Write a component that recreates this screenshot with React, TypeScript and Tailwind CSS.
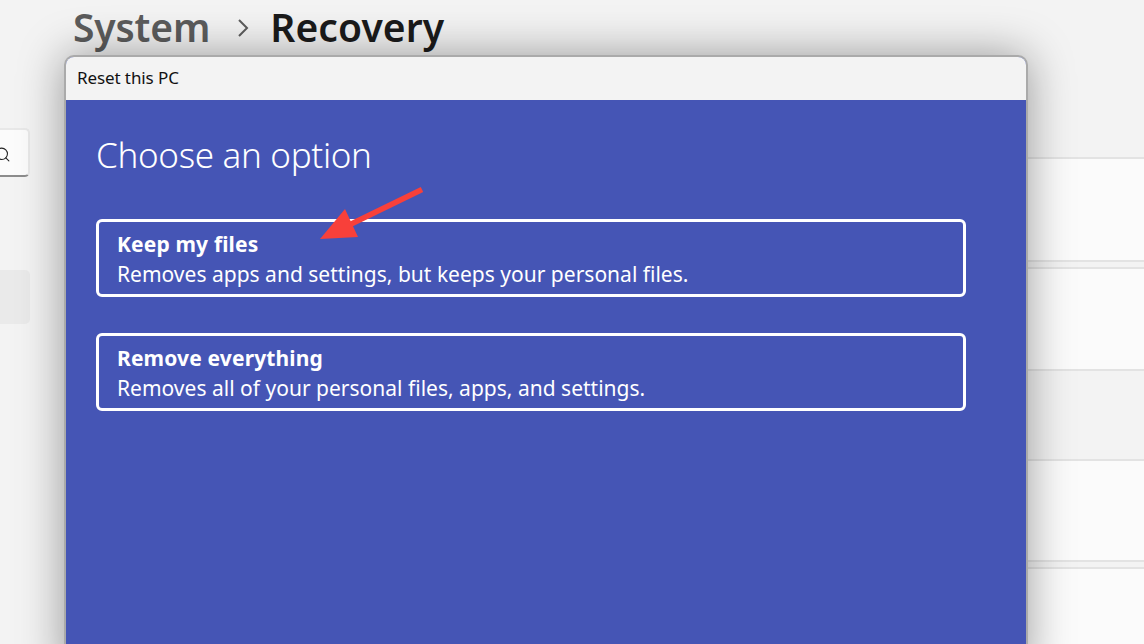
import { Search } from 'lucide-react'

const cardRows = [
  { className: 'h-[105px] bg-[#fbfbfb] border-y-2 border-[#e3e3e3]' },
  { className: 'h-[102px] mt-[5px] bg-[#fbfbfb] border-t-2 border-[#e3e3e3]' },
  { className: 'h-[90px] bg-[#f3f3f3] border-t-2 border-[#e3e3e3]' },
  { className: 'h-[103px] bg-[#fbfbfb] border-y-2 border-[#e3e3e3]' },
  { className: 'h-[80px] mt-[5px] bg-[#fbfbfb] border-t-2 border-[#e3e3e3]' },
]

const options = [
  { title: 'Keep my files', description: 'Removes apps and settings, but keeps your personal files.' },
  { title: 'Remove everything', description: 'Removes all of your personal files, apps, and settings.' },
]

function Sidebar() {
  return (
    <aside className="w-[30px] shrink-0 pt-[128px]">
      <div className="flex h-[49px] items-center justify-end rounded-r-[5px] border-2 border-l-0 border-[#e8e8e8] border-b-[#8c8c8c] bg-[#fbfbfb] pr-[17px]">
        <Search className="mt-[4px] h-[17px] w-[17px] shrink-0 text-[#222]" strokeWidth={1.5} />
      </div>
      <div className="mt-[93px] h-[54px] rounded-r-[5px] bg-[#eaeaea]" />
    </aside>
  )
}

function OptionButton({ title, description }: { title: string; description: string }) {
  return (
    <button className="flex h-[78px] w-[870px] flex-col items-start justify-center rounded-[6px] border-[3px] border-white pt-[2px] pl-[18px] text-left text-white">
      <span className="text-[21px] leading-[30px] font-bold tracking-[0.15px]">{title}</span>
      <span className="text-[21px] leading-[30px] tracking-[0.01px]">{description}</span>
    </button>
  )
}

export default function App() {
  return (
    <div className="relative flex h-[644px] w-[1144px] overflow-hidden bg-[#f3f3f3] font-['Noto_Sans',sans-serif]">
      <Sidebar />

      <main className="min-w-0 flex-1 pl-[43px]">
        <header className="flex h-[157px] items-start pt-[1px] text-[39px] leading-[52px] font-semibold">
          <span className="tracking-[-0.15px] text-[#5c5c5c]">System</span>
          <svg className="mt-[17px] mr-[21px] ml-[27px]" width="12" height="20" viewBox="0 0 12 20" fill="none">
            <path d="M2 2 L10 10 L2 18" stroke="#5c5c5c" strokeWidth="2" />
          </svg>
          <span className="tracking-[0.1px] text-[#1b1b1b]">Recovery</span>
        </header>
        <div className="flex flex-col">
          {cardRows.map((row, i) => (
            <div key={i} className={row.className} />
          ))}
        </div>
      </main>

      {/* Reset dialog */}
      <section className="absolute top-[55px] left-[64px] flex h-[620px] w-[964px] flex-col overflow-hidden rounded-t-[10px] border-2 border-[#aaaaaa] bg-[#4555b5] shadow-[0_0_45px_rgba(0,0,0,0.38)]">
        <div className="flex h-[43px] shrink-0 items-center bg-[#f3f3f3] pb-[2px] pl-[11px] text-[17px] tracking-[-0.1px] text-[#111]">
          Reset this PC
        </div>
        <div className="flex flex-col pt-[31px] pl-[30px]">
          <h1 className="text-[35px] leading-[48px] font-light tracking-[-0.32px] text-white">Choose an option</h1>
          <div className="mt-[40px] flex flex-col gap-[36px]">
            {options.map((option) => (
              <OptionButton key={option.title} {...option} />
            ))}
          </div>
        </div>
      </section>

      {/* Annotation arrow */}
      <svg className="absolute top-[185px] left-[315px]" width="112" height="60" viewBox="315 185 112 60">
        <line x1="422" y1="189.5" x2="345" y2="227" stroke="#f8403a" strokeWidth="5.5" />
        <polygon points="320,239 345,209 358,237" fill="#f8403a" />
      </svg>
    </div>
  )
}
